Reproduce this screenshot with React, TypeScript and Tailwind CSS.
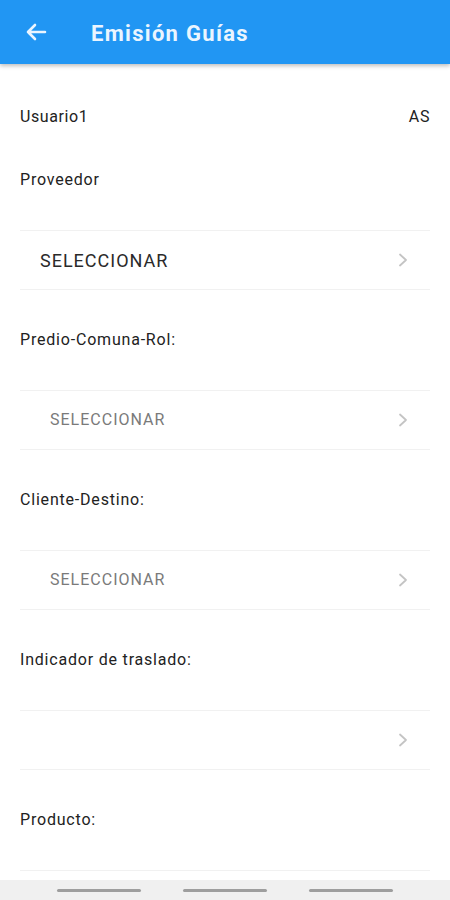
import React from "react";

const Chevron = () => (
  <svg width="14" height="16" viewBox="0 0 14 16" fill="none" className="shrink-0">
    <path d="M4 2.5 L10 8 L4 13.5" stroke="#c4c4c4" strokeWidth="1.8" strokeLinecap="round" strokeLinejoin="round" />
  </svg>
);

const Label = ({ text }: { text: string }) => (
  <div className="h-[100px] flex items-center px-5 text-[16px] leading-5 tracking-[0.8px] text-[#222]">{text}</div>
);

const SelectRow = ({ text, primary }: { text?: string; primary?: boolean }) => (
  <div className="h-[60px] mx-5 border-y border-[#f1f1f1] flex items-center justify-between pr-[20px]">
    {primary ? (
      <span className="pl-[20px] text-[18px] text-[#2a2a2a] tracking-[1px]">{text}</span>
    ) : (
      <span className="pl-[30px] text-[16px] text-[#7a7a7a] tracking-[1px]">{text ?? ""}</span>
    )}
    <Chevron />
  </div>
);

export default function App() {
  return (
    <div className="w-[450px] h-[900px] overflow-hidden flex flex-col bg-white" style={{ fontFamily: "Roboto, 'Noto Sans', sans-serif" }}>
      <div className="h-16 shrink-0 bg-[#2196f3] flex items-center shadow-[0_2px_4px_rgba(0,0,0,0.25)] relative z-10">
        <svg width="22" height="20" viewBox="0 0 22 20" className="ml-[25px]" fill="none">
          <path d="M20 10 H3 M10 3 L3 10 L10 17" stroke="#eaf5ff" strokeWidth="2.6" strokeLinecap="round" strokeLinejoin="round" />
        </svg>
        <span className="ml-[44px] mt-[2px] text-[22px] font-bold text-[#eaf5ff] tracking-[1.3px]">Emisión Guías</span>
      </div>
      <div className="flex-1 overflow-hidden">
        <div className="h-[66px] flex items-end justify-between pb-[3px] px-5 text-[16px] leading-5 tracking-[0.6px] text-[#222]">
          <span>Usuario1</span>
          <span>AS</span>
        </div>
        <Label text="Proveedor" />
        <SelectRow text="SELECCIONAR" primary />
        <Label text="Predio-Comuna-Rol:" />
        <SelectRow text="SELECCIONAR" />
        <Label text="Cliente-Destino:" />
        <SelectRow text="SELECCIONAR" />
        <Label text="Indicador de traslado:" />
        <SelectRow />
        <Label text="Producto:" />
        <div className="h-[60px] mx-5 border-t border-[#f1f1f1]" />
      </div>
      <div className="h-5 shrink-0 bg-[#f0f0f0] flex items-center justify-center gap-[42px]">
        <div className="w-[84px] h-[3px] rounded-full bg-[#9e9e9e]" />
        <div className="w-[84px] h-[3px] rounded-full bg-[#9e9e9e]" />
        <div className="w-[84px] h-[3px] rounded-full bg-[#9e9e9e]" />
      </div>
    </div>
  );
}
